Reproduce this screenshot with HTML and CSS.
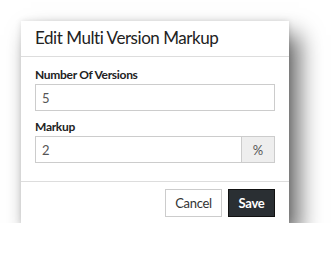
FILE: index.html
```html
<!DOCTYPE html>
<html lang="en">
<head>
    <meta charset="UTF-8">
    <meta name="viewport" content="width=device-width, initial-scale=1.0">
    <title>Edit Multi Version Markup</title>
    <link rel="stylesheet" href="styles.css">
</head>
<body>
    <div class="modal">
        <div class="modal-header">Edit Multi Version Markup</div>
        <div class="modal-body">
            <div class="field">
                <label for="versions">Number Of Versions</label>
                <input id="versions" class="input" type="text" value="5">
            </div>
            <div class="field">
                <label for="markup">Markup</label>
                <div class="input-group">
                    <input id="markup" class="input" type="text" value="2">
                    <span class="addon">%</span>
                </div>
            </div>
        </div>
        <div class="modal-footer">
            <button class="btn btn-default">Cancel</button>
            <button class="btn btn-dark">Save</button>
        </div>
    </div>
</body>
</html>
```

FILE: styles.css
```css
body {
    margin: 0;
    padding: 21px 0 0 21px;
    background-color: #fff;
    font-family: "Lato", "Open Sans", sans-serif;
    color: #222;
}
.modal {
    width: 268px;
    background: #fff;
    box-shadow: 0 0 6px rgba(0, 0, 0, 0.12), 10px 14px 22px rgba(0, 0, 0, 0.6);
}
.modal-header {
    height: 36px;
    box-sizing: border-box;
    padding: 6px 14px 0;
    font-size: 17px;
    letter-spacing: -0.45px;
    line-height: 22px;
    border-bottom: 1px solid #ddd;
}
.modal-body {
    padding: 10px 14px 18px;
}
.field + .field {
    margin-top: 8px;
}
.field label {
    display: block;
    font-size: 12px;
    font-weight: bold;
    letter-spacing: -0.3px;
    line-height: 16px;
    margin-bottom: 1px;
}
.input {
    display: block;
    width: 100%;
    height: 27px;
    box-sizing: border-box;
    border: 1px solid #ccc;
    padding: 0 6px;
    font-family: inherit;
    font-size: 13px;
    color: #555;
    outline: none;
}
.input-group {
    display: flex;
}
.input-group .input {
    flex: 1;
}
.addon {
    width: 33px;
    height: 27px;
    box-sizing: border-box;
    border: 1px solid #ccc;
    border-left: none;
    background: #eee;
    display: flex;
    align-items: center;
    justify-content: center;
    font-size: 13px;
    color: #555;
}
.modal-footer {
    border-top: 1px solid #ddd;
    padding: 7px 14px 6px;
    display: flex;
    justify-content: flex-end;
    gap: 6px;
}
.btn {
    height: 28px;
    box-sizing: border-box;
    padding: 0;
    font-family: inherit;
    font-size: 13px;
    letter-spacing: -0.3px;
    border: 1px solid #ccc;
    background: #fff;
    color: #333;
}
.btn-default {
    width: 57px;
}
.btn-dark {
    width: 47px;
    background: #2a2f33;
    border-color: #111;
    color: #fff;
    font-weight: bold;
}
```
